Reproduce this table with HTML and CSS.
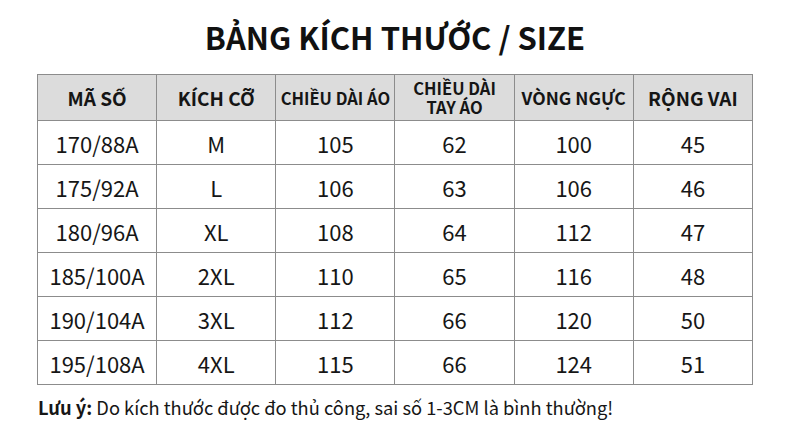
FILE: index.html
```html
<!DOCTYPE html>
<html lang="vi">
<head>
<meta charset="utf-8">
<link rel="stylesheet" href="styles.css">
</head>
<body>
<div class="page">
  <h1 class="title">BẢNG KÍCH THƯỚC / SIZE</h1>
  <table class="size-table">
    <thead>
      <tr>
        <th class="h-lg">MÃ SỐ</th>
        <th class="h-lg">KÍCH CỠ</th>
        <th class="h-sm">CHIỀU DÀI ÁO</th>
        <th class="h-sm h-two">CHIỀU DÀI<br>TAY ÁO</th>
        <th class="h-md">VÒNG NGỰC</th>
        <th class="h-lg">RỘNG VAI</th>
      </tr>
    </thead>
    <tbody>
      <tr><td>170/88A</td><td>M</td><td>105</td><td>62</td><td>100</td><td>45</td></tr>
      <tr><td>175/92A</td><td>L</td><td>106</td><td>63</td><td>106</td><td>46</td></tr>
      <tr><td>180/96A</td><td>XL</td><td>108</td><td>64</td><td>112</td><td>47</td></tr>
      <tr><td>185/100A</td><td>2XL</td><td>110</td><td>65</td><td>116</td><td>48</td></tr>
      <tr><td>190/104A</td><td>3XL</td><td>112</td><td>66</td><td>120</td><td>50</td></tr>
      <tr><td>195/108A</td><td>4XL</td><td>115</td><td>66</td><td>124</td><td>51</td></tr>
    </tbody>
  </table>
  <p class="note"><strong>Lưu ý:</strong> Do kích thước được đo thủ công, sai số 1-3CM là bình thường!</p>
</div>
</body>
</html>
```
FILE: styles.css
```css
html, body {
  margin: 0;
  padding: 0;
  background: #ffffff;
}
body {
  font-family: "Noto Sans CJK SC", "Noto Sans", sans-serif;
  color: #111111;
}
.page {
  width: 790px;
  height: 422px;
  padding: 15px 37px 0 37px;
  box-sizing: border-box;
}
.title {
  margin: 0 0 15px 0;
  font-size: 31px;
  line-height: 44px;
  font-weight: 700;
  text-align: center;
  color: #111111;
}
.size-table {
  width: 716px;
  border-collapse: collapse;
  table-layout: fixed;
}
.size-table th,
.size-table td {
  border: 1px solid #8c8c8c;
  text-align: center;
  vertical-align: middle;
  padding: 0;
}
.size-table th {
  background: #dcdcdc;
  height: 45px;
  font-weight: 700;
  color: #151515;
}
.h-lg { font-size: 19px; }
.h-md { font-size: 17.5px; }
.h-sm { font-size: 16.5px; }
.h-two { line-height: 19px; padding-top: 2px; }
.size-table td {
  height: 43px;
  font-size: 22px;
  font-weight: 400;
  color: #161616;
}
.note {
  margin: 10px 0 0 1px;
  font-size: 18.3px;
  line-height: 24px;
  color: #161616;
}
.note strong {
  font-weight: 700;
}
```
